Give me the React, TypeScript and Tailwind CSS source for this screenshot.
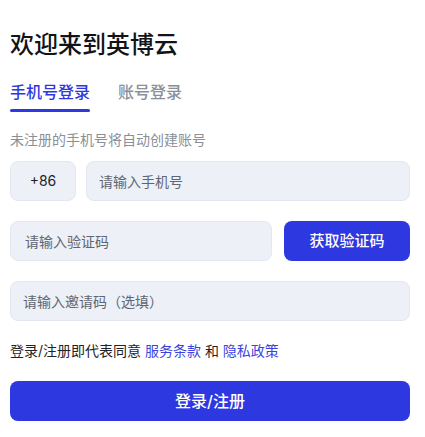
import { useState } from "react";

const FONT = "font-['Inter','Noto_Sans_CJK_SC',sans-serif]";

const inputCls =
  "h-10 rounded-lg border border-[#e3e7ef] bg-[#edf0f7] px-3 text-sm text-[#1f2328] placeholder:text-[#5f6672] outline-none";

export default function App() {
  const [tab, setTab] = useState<"phone" | "account">("phone");

  return (
    <div className={`${FONT} min-h-screen bg-white pt-[28px]`}>
      <div className="ml-[10px] w-[400px]">
        <h1 className="text-[24px] leading-[34px] font-medium text-[#111418]">欢迎来到英博云</h1>

        <div className="mt-[18px] flex gap-7">
          <button
            type="button"
            onClick={() => setTab("phone")}
            className={`flex flex-col items-stretch text-base leading-6 font-medium ${
              tab === "phone" ? "text-[#2e38e0]" : "text-[#8a9099]"
            }`}
          >
            <span>手机号登录</span>
            <span
              className={`mt-[5px] h-[3px] rounded-full ${tab === "phone" ? "bg-[#2e38e0]" : "bg-transparent"}`}
            />
          </button>
          <button
            type="button"
            onClick={() => setTab("account")}
            className={`flex flex-col items-stretch text-base leading-6 font-medium ${
              tab === "account" ? "text-[#2e38e0]" : "text-[#8a9099]"
            }`}
          >
            <span>账号登录</span>
            <span
              className={`mt-[5px] h-[3px] rounded-full ${tab === "account" ? "bg-[#2e38e0]" : "bg-transparent"}`}
            />
          </button>
        </div>

        <p className="mt-[18px] text-sm leading-5 text-[#8a8f98]">未注册的手机号将自动创建账号</p>

        <div className="mt-[11px] flex gap-[10px]">
          <div className="flex h-10 w-[66px] items-center justify-center rounded-lg border border-[#e3e7ef] bg-[#edf0f7] text-sm text-[#1f2328]">
            +86
          </div>
          <input className={`${inputCls} min-w-0 flex-1`} placeholder="请输入手机号" />
        </div>

        <div className="mt-5 flex gap-3">
          <input className={`${inputCls} min-w-0 flex-1 px-[14px]`} placeholder="请输入验证码" />
          <button
            type="button"
            className="h-10 w-[126px] rounded-lg bg-[#2e38e0] text-[15px] font-medium text-white"
          >
            获取验证码
          </button>
        </div>

        <input className={`${inputCls} mt-5 w-full`} placeholder="请输入邀请码（选填）" />

        <p className="mt-[20px] text-sm leading-5 text-[#1f2328]">
          登录/注册即代表同意 <a className="text-[#3a45e0]">服务条款</a> 和{" "}
          <a className="text-[#3a45e0]">隐私政策</a>
        </p>

        <button
          type="button"
          className="mt-[20px] h-10 w-full rounded-lg bg-[#2e38e0] text-base font-medium text-white"
        >
          登录/注册
        </button>
      </div>
    </div>
  );
}
